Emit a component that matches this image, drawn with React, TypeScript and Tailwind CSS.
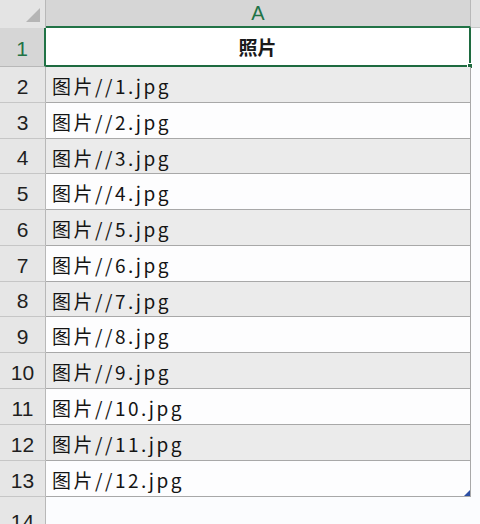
const ROWS = [
  { n: 2, text: "图片//1.jpg", h: "h-[36px]" },
  { n: 3, text: "图片//2.jpg", h: "h-[36px]" },
  { n: 4, text: "图片//3.jpg", h: "h-[35px]" },
  { n: 5, text: "图片//4.jpg", h: "h-[36px]" },
  { n: 6, text: "图片//5.jpg", h: "h-[36px]" },
  { n: 7, text: "图片//6.jpg", h: "h-[36px]" },
  { n: 8, text: "图片//7.jpg", h: "h-[35px]" },
  { n: 9, text: "图片//8.jpg", h: "h-[36px]" },
  { n: 10, text: "图片//9.jpg", h: "h-[36px]" },
  { n: 11, text: "图片//10.jpg", h: "h-[36px]" },
  { n: 12, text: "图片//11.jpg", h: "h-[36px]" },
  { n: 13, text: "图片//12.jpg", h: "h-[36px]" },
]

const font = "font-['Liberation_Sans','Noto_Sans_CJK_SC',sans-serif]"
const cellFont = "font-['Noto_Sans_CJK_SC',sans-serif]"

export default function App() {
  return (
    <div className={`w-[480px] h-[524px] overflow-hidden bg-[#fbfcfe] ${font}`}>
      {/* column header */}
      <div className="flex h-[28px]">
        <div className="relative w-[46px] shrink-0 bg-[#e4e4e4] border-r border-[#b8b8b8]">
          <svg className="absolute right-[5px] bottom-[6px]" width="14" height="14" viewBox="0 0 14 14">
            <polygon points="14,0 14,14 0,14" fill="#b5b5b5" />
          </svg>
        </div>
        <div className="w-[425px] shrink-0 flex items-end justify-center bg-[#d6d6d6] border-b-2 border-[#217346] border-r border-r-[#b8b8b8] text-[20px] leading-none text-[#217346] pb-[3px]">
          A
        </div>
        <div className="flex-1 bg-[#e2e2e2] border-b border-[#c8c8c8]" />
      </div>

      {/* row 1 */}
      <div className="flex h-[39px]">
        <div className="w-[46px] shrink-0 flex items-center justify-center pt-[3px] bg-[#d6d6d6] border-r-2 border-[#217346] border-b border-b-[#b8b8b8] text-[21px] text-[#217346]">
          1
        </div>
        <div className={`relative w-[425px] shrink-0 flex items-center justify-center pt-[2px] bg-white border-2 border-[#1d6a3f] border-l-0 border-t-0 text-[19px] font-bold text-[#1a1a1a] ${cellFont}`}>
          照片
          <div className="absolute right-[-4px] bottom-[-4px] w-[6px] h-[6px] bg-[#1d6a3f] border border-white" />
        </div>
        <div className="flex-1" />
      </div>

      {ROWS.map((r) => (
        <div key={r.n} className={`flex ${r.h}`}>
          <div className="w-[46px] shrink-0 flex items-center justify-center pt-[4px] bg-[#e6e6e6] border-r border-[#b8b8b8] border-b border-b-[#c6c6c6] text-[21px] text-[#1f1f1f]">
            {r.n}
          </div>
          <div
            className={`relative w-[425px] shrink-0 flex items-center pl-[6px] pt-[4px] border-r border-[#a8a8a8] border-b border-b-[#a8a8a8] text-[19px] tracking-[2.5px] text-[#141414] ${cellFont} ${
              r.n % 2 === 0 ? "bg-[#ebebeb]" : "bg-[#fdfdfe]"
            }`}
          >
            {r.text}
            {r.n === 13 && (
              <svg className="absolute right-0 bottom-0" width="6" height="6" viewBox="0 0 6 6">
                <polygon points="6,0 6,6 0,6" fill="#2c4fa3" />
              </svg>
            )}
          </div>
          <div className="flex-1" />
        </div>
      ))}

      {/* row 14 */}
      <div className="flex h-[30px]">
        <div className="w-[46px] shrink-0 flex items-start justify-center pt-[9px] bg-[#e6e6e6] border-r border-[#b8b8b8] text-[21px] text-[#1f1f1f]">
          14
        </div>
        <div className="flex-1" />
      </div>
    </div>
  )
}
